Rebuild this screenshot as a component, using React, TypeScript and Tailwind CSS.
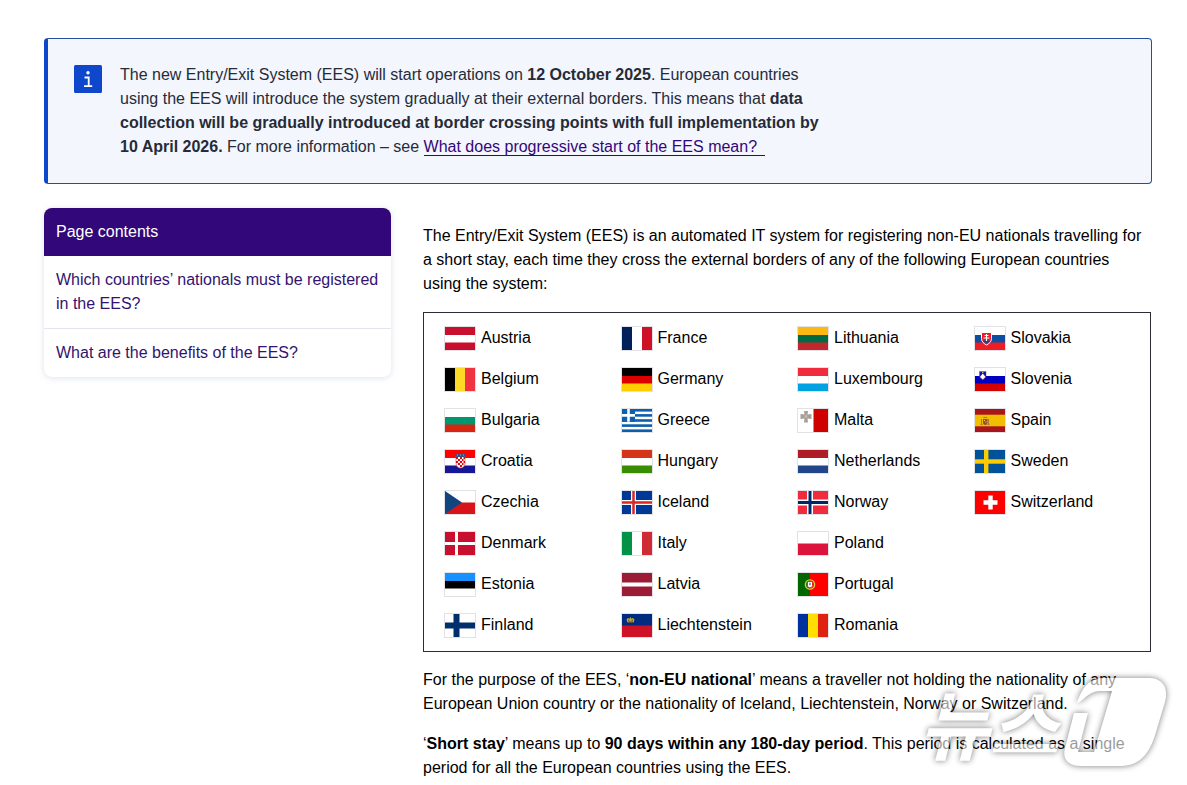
import type { ReactNode } from 'react';

const horizontal = (a: string, b: string, c: string) => (
  <>
    <rect width="30" height="8" fill={a} />
    <rect y="8" width="30" height="8" fill={b} />
    <rect y="15.5" width="30" height="7.5" fill={c} />
  </>
);

const vertical = (a: string, b: string, c: string) => (
  <>
    <rect width="10" height="23" fill={a} />
    <rect x="10" width="10" height="23" fill={b} />
    <rect x="20" width="10" height="23" fill={c} />
  </>
);

const cross = (field: string, bar: string, x: number, w: number, inner?: string) => (
  <>
    <rect width="30" height="23" fill={field} />
    <rect x={x} width={w} height="23" fill={bar} />
    <rect y={11.5 - w / 2} width="30" height={w} fill={bar} />
    {inner && <rect x={x + w / 4} width={w / 2} height="23" fill={inner} />}
    {inner && <rect y={11.5 - w / 4} width="30" height={w / 2} fill={inner} />}
  </>
);

type Country = { name: string; flag: ReactNode };

const countries: Country[] = [
  { name: 'Austria', flag: horizontal('#c8102e', '#fff', '#c8102e') },
  { name: 'Belgium', flag: vertical('#000', '#fdda25', '#ef3340') },
  { name: 'Bulgaria', flag: horizontal('#fff', '#00966e', '#d62612') },
  {
    name: 'Croatia',
    flag: (
      <>
        {horizontal('#f00', '#fff', '#171796')}
        <path d="M11 6h9v7c0 3-2 5-4.500 5s-4.500-2-4.500-5z" fill="#fff" stroke="#e33" strokeWidth=".6" />
        <path d="M11 7h2v2h-2zM15 7h2v2h-2zM18.500 7h1.500v2h-1.500zM13 9h2v2h-2zM17 9h1.500v2H17zM11 11h2v2h-2zM15 11h2v2h-2zM18.500 11H20v2h-1.500zM13 13h2v2h-2zM17 13h1.500v2H17zM15 15h2v2h-2z" fill="#e00" />
        <path d="M10.500 4.500l2-1 1.500.8 1.500-.8 1.500.8 1.500-.8 2 1-.8 2.500h-8.400z" fill="#38508f" />
        <path d="M12 5h1M15 5h1M18 5h1" stroke="#d6a94a" />
      </>
    ),
  },
  {
    name: 'Czechia',
    flag: (
      <>
        <rect width="30" height="12" fill="#fff" />
        <rect y="11.5" width="30" height="11.500" fill="#d7141a" />
        <path d="M0 0l17 11.500L0 23z" fill="#11457e" />
      </>
    ),
  },
  { name: 'Denmark', flag: cross('#c8102e', '#fff', 10, 3) },
  { name: 'Estonia', flag: horizontal('#1791ff', '#000', '#fff') },
  { name: 'Finland', flag: cross('#fff', '#002f6c', 8.5, 6) },
  { name: 'France', flag: vertical('#00205b', '#fff', '#ce1126') },
  { name: 'Germany', flag: horizontal('#000', '#d00', '#ffce00') },
  {
    name: 'Greece',
    flag: (
      <>
        <rect width="30" height="23" fill="#fff" />
        {[0, 5.1, 10.2, 15.3, 20.4].map((y) => (
          <rect key={y} y={y} width="30" height="2.6" fill="#0d5eaf" />
        ))}
        <rect width="13" height="12.800" fill="#0d5eaf" />
        <path d="M6.500 0v12.800M0 6.400h13" stroke="#fff" strokeWidth="2.600" />
      </>
    ),
  },
  { name: 'Hungary', flag: horizontal('#d43516', '#fff', '#388d00') },
  { name: 'Iceland', flag: cross('#003897', '#fff', 9, 5, '#d72828') },
  { name: 'Italy', flag: vertical('#009246', '#fff', '#ce2b37') },
  {
    name: 'Latvia',
    flag: (
      <>
        <rect width="30" height="23" fill="#9d1c35" />
        <rect y="9.500" width="30" height="4" fill="#fff" />
      </>
    ),
  },
  {
    name: 'Liechtenstein',
    flag: (
      <>
        <rect width="30" height="12" fill="#002b7f" />
        <rect y="11.500" width="30" height="11.500" fill="#ce1126" />
        <path d="M5.500 8.500L4.500 5.500 6 4l1.500.7L8.500 3l1 1.700L11 4l1.500 1.500-1 3z" fill="#c9a83c" />
        <path d="M6 6.200h1.500M9.500 6.200H11M6 8h5" stroke="#3a3520" strokeWidth=".8" />
      </>
    ),
  },
  { name: 'Lithuania', flag: horizontal('#fdb913', '#006a44', '#c1272d') },
  { name: 'Luxembourg', flag: horizontal('#ef2b3d', '#fff', '#00a2e1') },
  {
    name: 'Malta',
    flag: (
      <>
        <rect width="16" height="23" fill="#fff" />
        <rect x="15.500" width="14.500" height="23" fill="#cf0000" />
        <path d="M6 2h4l-.5 3.500 4-.5v5l-4-.5.5 4H6l.5-4-4 .5V5l4 .5z" fill="#a79f97" />
        <circle cx="8" cy="7.500" r="1.400" fill="#c4bbb0" />
      </>
    ),
  },
  { name: 'Netherlands', flag: horizontal('#ae1c28', '#fff', '#21468b') },
  { name: 'Norway', flag: cross('#ef2b3d', '#fff', 9, 6, '#002868') },
  {
    name: 'Poland',
    flag: (
      <>
        <rect width="30" height="12" fill="#fff" />
        <rect y="11.500" width="30" height="11.500" fill="#dc143c" />
      </>
    ),
  },
  {
    name: 'Portugal',
    flag: (
      <>
        <rect width="12" height="23" fill="#060" />
        <rect x="12" width="18" height="23" fill="#f00" />
        <circle cx="12" cy="11.500" r="4.600" fill="none" stroke="#d8cf3c" strokeWidth="1.400" />
        <path d="M9.500 8.500h5v4c0 3-5 3-5 0z" fill="#fff" stroke="#e22" strokeWidth="1" />
        <path d="M12 9.500v3M11 11h2" stroke="#456" strokeWidth=".7" />
      </>
    ),
  },
  { name: 'Romania', flag: vertical('#00319c', '#ffde00', '#de2110') },
  {
    name: 'Slovakia',
    flag: (
      <>
        {horizontal('#fff', '#0b4ea2', '#ee1c25')}
        <path d="M6.500 5.500h10v6c0 3.500-2.500 5-5 6.500-2.500-1.500-5-3-5-6.500z" fill="#ee1c25" stroke="#fff" />
        <path d="M8 14.500c1-1.500 2-1.500 3.500-.5 1.500-1 2.500-1 3.500.5l-3.500 2.500z" fill="#0b4ea2" />
        <path d="M11.500 7v7M9.500 8.500h4M8.500 11h6" stroke="#fff" strokeWidth="1.100" />
      </>
    ),
  },
  {
    name: 'Slovenia',
    flag: (
      <>
        {horizontal('#fff', '#0000c0', '#d50000')}
        <path d="M4.500 3.500h6.500v4c0 2-1.500 3.500-3.250 4.500C6 11 4.500 9.500 4.500 7.500z" fill="#1111a8" stroke="#b33a6a" strokeWidth=".5" />
        <path d="M5 9l1.500-2 1.250-1.500L9 7l1.500 2-2.750 2.500z" fill="#fff" />
        <path d="M7 4.500h1.500" stroke="#fd5" strokeWidth=".8" />
      </>
    ),
  },
  {
    name: 'Spain',
    flag: (
      <>
        <rect width="30" height="23" fill="#aa151b" />
        <rect y="5.700" width="30" height="11.600" fill="#f1bf00" />
        <path d="M8 10h4.500v4c0 2.500-4.500 2.500-4.500 0z" fill="#a84825" />
        <path d="M6.500 10v5.500M13.500 10v5.500M8.500 8.500h3.500M5.500 15.500h2M12.500 15.500h2" stroke="#987444" strokeWidth=".9" />
        <path d="M9 11h1v1H9zM10.500 12.500h1v1h-1z" fill="#e5cb8a" />
      </>
    ),
  },
  { name: 'Sweden', flag: cross('#00529b', '#fecb00', 9, 4.4) },
  {
    name: 'Switzerland',
    flag: (
      <>
        <rect width="30" height="23" fill="#f00" />
        <path d="M15.500 4.500v14M8.500 11.500h14" stroke="#fff" strokeWidth="4.400" />
      </>
    ),
  },
];

function Notice() {
  return (
    <section
      aria-label="Notice"
      className="flex items-start gap-[18px] rounded-sm border border-l-4 border-[#1f4f9e] border-l-[#0e47cb] bg-[#f3f6fd] py-6 pr-6 pl-[26px] text-[#262b38]"
    >
      <svg viewBox="0 0 28 28" className="mt-0.5 size-7 shrink-0" aria-hidden="true">
        <rect width="28" height="28" rx="1.500" fill="#0e47cb" />
        <circle cx="14" cy="7.800" r="1.700" fill="#fff" />
        <path d="M10.500 12.500h4.200v9M10 21.200h8.200" fill="none" stroke="#fff" strokeWidth="1.800" />
      </svg>
      <p className="max-w-[704px]">
        The new Entry/Exit System (EES) will start operations on <strong>12 October 2025</strong>. European countries
        using the EES will introduce the system gradually at their external borders. This means that{' '}
        <strong>
          data collection will be gradually introduced at border crossing points with full implementation by 10 April
          2026.
        </strong>{' '}
        For more information – see{' '}
        <a href="#progressive-start" className="border-b border-[#33077a] pr-2 text-[#33077a]">
          What does progressive start of the EES mean?
        </a>
      </p>
    </section>
  );
}

function PageContents() {
  return (
    <nav aria-label="Page contents" className="w-[347px] shrink-0 overflow-hidden rounded-lg shadow-[0_1px_6px_#c9cfe099]">
      <h2 className="bg-[#31077a] px-3 py-3 text-white">Page contents</h2>
      <ul className="divide-y divide-[#e3e6ee] text-[#33136f]">
        <li>
          <a href="#nationals" className="block px-3 py-3">
            Which countries’ nationals must be registered in the EES?
          </a>
        </li>
        <li>
          <a href="#benefits" className="block px-3 py-3">
            What are the benefits of the EES?
          </a>
        </li>
      </ul>
    </nav>
  );
}

function Watermark() {
  return (
    <div className="pointer-events-none absolute -right-4 bottom-[13px] flex items-end gap-1 opacity-60 drop-shadow-[0_0_3px_#222]">
      <span className="font-['Noto_Sans_CJK_KR',sans-serif] text-[76px] leading-[92px] font-bold text-white italic">
        뉴스
      </span>
      <svg viewBox="0 0 104 90" className="h-[90px] w-[104px]" aria-hidden="true">
        <path
          d="M14 26C19 11 26 1 40 1H86C99 1 106 10 102 25L93 55C87 77 76 89 58 89H18C5 89-1 82 2 71L11 36H25L15 75H31L49 14H36C24 15 20 25 14 26Z"
          fill="#fff"
        />
      </svg>
    </div>
  );
}

export default function App() {
  return (
    <div className="bg-white pt-[38px] pr-[35px] pl-11 font-['Liberation_Sans',Arial,sans-serif] text-base leading-6 text-black">
      <Notice />
      <div className="mt-6 flex items-start gap-8 pr-px">
        <PageContents />
        <main className="relative flex min-w-0 flex-1 flex-col gap-4 pt-4">
          <p className="pr-2">
            The Entry/Exit System (EES) is an automated IT system for registering non-EU nationals travelling for a short
            stay, each time they cross the external borders of any of the following European countries using the system:
          </p>
          <ul className="grid grid-flow-col grid-cols-4 grid-rows-8 border border-[#2a2d35] pt-1 pb-1.5 pl-5">
            {countries.map(({ name, flag }) => (
              <li key={name} className="flex h-[41px] items-center gap-[5px]">
                <svg
                  viewBox="0 0 30 23"
                  preserveAspectRatio="none"
                  className="mt-0.5 h-[25px] w-8 shrink-0 border border-[#e2e2e6]"
                  aria-hidden="true"
                >
                  {flag}
                </svg>
                {name}
              </li>
            ))}
          </ul>
          <p className="pr-2">
            For the purpose of the EES, ‘<strong>non-EU national</strong>’ means a traveller not holding the nationality
            of any European Union country or the nationality of Iceland, Liechtenstein, Norway or Switzerland.
          </p>
          <p className="pr-2">
            ‘<strong>Short stay</strong>’ means up to <strong>90 days within any 180-day period</strong>. This period is
            calculated as a single period for all the European countries using the EES.
          </p>
          <Watermark />
        </main>
      </div>
    </div>
  );
}
